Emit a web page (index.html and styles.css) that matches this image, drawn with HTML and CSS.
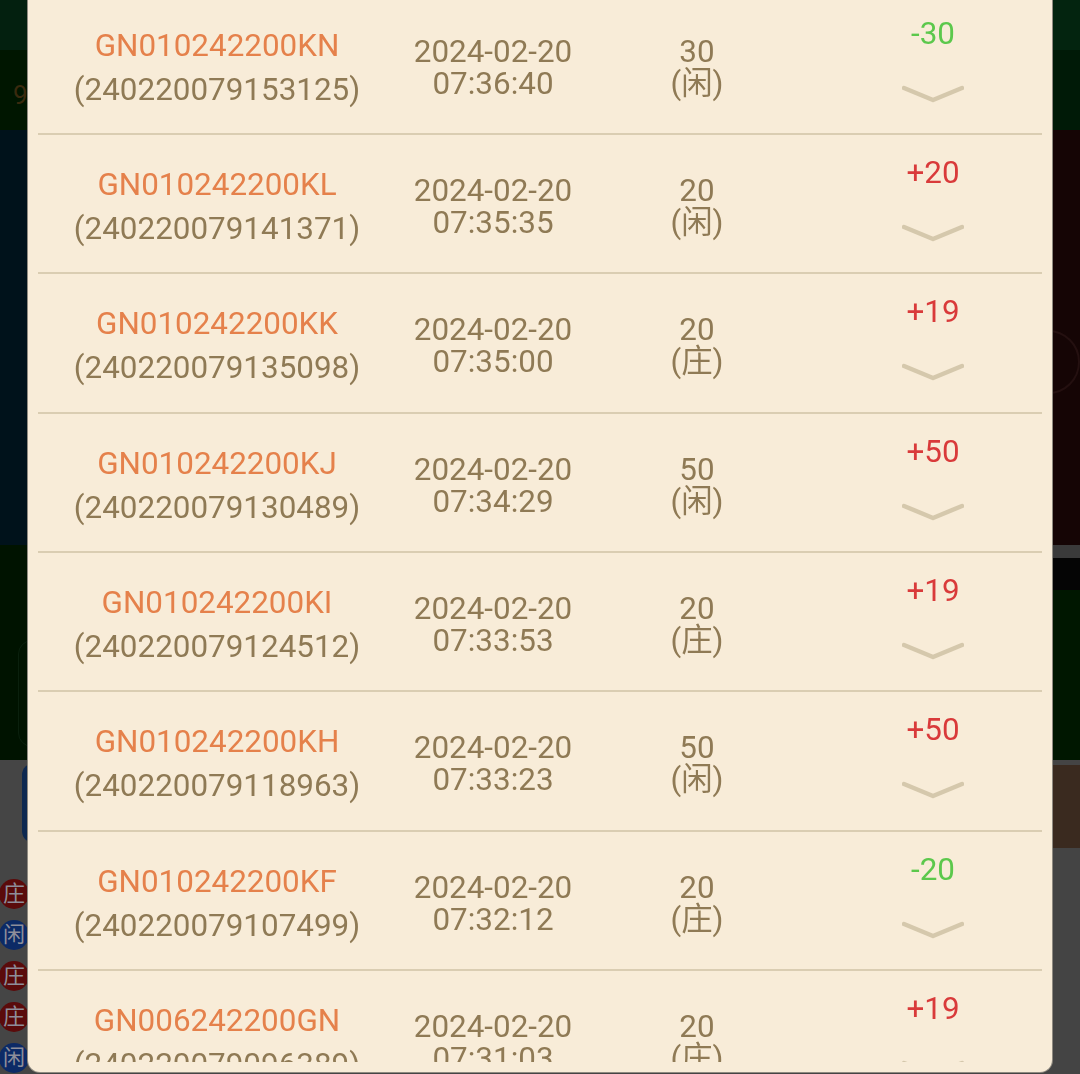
FILE: index.html
```html
<!DOCTYPE html>
<html lang="zh">
<head>
  <meta charset="UTF-8">
  <meta name="viewport" content="width=device-width, initial-scale=1.0">
  <title>投注记录</title>
  <link rel="stylesheet" href="styles.css">
</head>
<body>
  <!-- game table behind the dialog -->
  <div class="game">
    <div class="band b1"><div class="side l"></div><div class="side r"></div></div>
    <div class="band b2"><div class="side l"><span class="round-no">9</span></div><div class="side r"></div></div>
    <div class="band b3"><div class="side l"></div><div class="side r"><span class="ring"></span></div></div>
    <div class="band b4">
      <div class="side l"><span class="ghost-btn"></span></div>
      <div class="side r">
        <div class="r-gray"></div>
        <div class="r-dark"><span class="r-chip"></span></div>
      </div>
    </div>
    <div class="band b5">
      <div class="side l">
        <div class="blue-btn"></div>
        <div class="badges">
          <span class="badge red">庄</span>
          <span class="badge blue">闲</span>
          <span class="badge red">庄</span>
          <span class="badge red">庄</span>
          <span class="badge blue">闲</span>
        </div>
      </div>
      <div class="side r">
        <div class="brown-btn">台</div>
        <div class="r-lines"><span class="mark"></span></div>
      </div>
    </div>
  </div>

  <div class="dialog">
    <div class="list">
      <div class="row">
        <div class="id"><span class="code">GN010242200KN</span><br>(240220079153125)</div>
        <div class="when">2024-02-20<br>07:36:40</div>
        <div class="bet">30<br>(闲)</div>
        <div class="win"><span class="lose">-30</span><svg class="chev" viewBox="0 0 62 20"><polyline points="2,4 31,16 60,4"/></svg></div>
      </div>
      <div class="row">
        <div class="id"><span class="code">GN010242200KL</span><br>(240220079141371)</div>
        <div class="when">2024-02-20<br>07:35:35</div>
        <div class="bet">20<br>(闲)</div>
        <div class="win"><span class="gain">+20</span><svg class="chev" viewBox="0 0 62 20"><polyline points="2,4 31,16 60,4"/></svg></div>
      </div>
      <div class="row">
        <div class="id"><span class="code">GN010242200KK</span><br>(240220079135098)</div>
        <div class="when">2024-02-20<br>07:35:00</div>
        <div class="bet">20<br>(庄)</div>
        <div class="win"><span class="gain">+19</span><svg class="chev" viewBox="0 0 62 20"><polyline points="2,4 31,16 60,4"/></svg></div>
      </div>
      <div class="row">
        <div class="id"><span class="code">GN010242200KJ</span><br>(240220079130489)</div>
        <div class="when">2024-02-20<br>07:34:29</div>
        <div class="bet">50<br>(闲)</div>
        <div class="win"><span class="gain">+50</span><svg class="chev" viewBox="0 0 62 20"><polyline points="2,4 31,16 60,4"/></svg></div>
      </div>
      <div class="row">
        <div class="id"><span class="code">GN010242200KI</span><br>(240220079124512)</div>
        <div class="when">2024-02-20<br>07:33:53</div>
        <div class="bet">20<br>(庄)</div>
        <div class="win"><span class="gain">+19</span><svg class="chev" viewBox="0 0 62 20"><polyline points="2,4 31,16 60,4"/></svg></div>
      </div>
      <div class="row">
        <div class="id"><span class="code">GN010242200KH</span><br>(240220079118963)</div>
        <div class="when">2024-02-20<br>07:33:23</div>
        <div class="bet">50<br>(闲)</div>
        <div class="win"><span class="gain">+50</span><svg class="chev" viewBox="0 0 62 20"><polyline points="2,4 31,16 60,4"/></svg></div>
      </div>
      <div class="row">
        <div class="id"><span class="code">GN010242200KF</span><br>(240220079107499)</div>
        <div class="when">2024-02-20<br>07:32:12</div>
        <div class="bet">20<br>(庄)</div>
        <div class="win"><span class="lose">-20</span><svg class="chev" viewBox="0 0 62 20"><polyline points="2,4 31,16 60,4"/></svg></div>
      </div>
      <div class="row">
        <div class="id"><span class="code">GN006242200GN</span><br>(240220079096389)</div>
        <div class="when">2024-02-20<br>07:31:03</div>
        <div class="bet">20<br>(庄)</div>
        <div class="win"><span class="gain">+19</span><svg class="chev" viewBox="0 0 62 20"><polyline points="2,4 31,16 60,4"/></svg></div>
      </div>
    </div>
  </div>
</body>
</html>
```

FILE: styles.css
```css
body {
  margin: 0;
  height: 1074px;
  overflow: hidden;
  font-family: Roboto, "Noto Sans CJK SC", sans-serif;
  background: #1a1a1a;
}

/* ---- table behind ---- */
.game {
  display: flex;
  flex-direction: column;
  height: 1074px;
}
.band {
  display: flex;
}
.side {
  width: 50%;
}
.b1 { height: 50px; }
.b1 .l { background: #03200f; }
.b1 .r { background: #03240f; }

.b2 { height: 80px; }
.b2 .l { background: #001600; }
.b2 .r { background: #001a07; }
.round-no {
  display: block;
  padding: 30px 0 0 13px;
  font-size: 26px;
  line-height: 30px;
  color: #3a2a0e;
}

.b3 { height: 415px; }
.b3 .l { background: #00121b; }
.b3 .r { background: #150505; }
.ring {
  display: block;
  margin: 200px 0 0 auto;
  width: 60px;
  height: 60px;
  border: 2px solid #241010;
  border-radius: 50%;
}

.b4 { height: 215px; }
.b4 .l { background: #001300; }
.b4 .r { display: flex; flex-direction: column; background: #001700; }
.ghost-btn {
  display: block;
  margin: 95px 0 0 18px;
  height: 105px;
  border: 1px solid #0a200d;
  border-radius: 14px;
}
.r-gray { height: 13px; background: #3a3a3a; }
.r-dark { height: 32px; background: #050505; }
.r-chip {
  display: block;
  width: 14px;
  height: 30px;
  background: #2c1c08;
}

.b5 { flex: 1; }
.b5 .l { background: #454545; }
.b5 .r { background: #444; }
.blue-btn {
  margin: 3px 0 0 22px;
  height: 80px;
  background: #0d2850;
  border-radius: 12px 0 0 12px;
}
.badges {
  display: flex;
  flex-direction: column;
  gap: 11px;
  margin-top: 36px;
}
.badge {
  width: 30px;
  height: 30px;
  margin-left: -1px;
  border-radius: 50%;
  font-size: 22px;
  line-height: 30px;
  text-align: center;
  color: #8e8e9a;
}
.badge.red { background: #5a0b0b; }
.badge.blue { background: #0c2a66; }
.brown-btn {
  margin-top: 5px;
  height: 83px;
  padding-left: 9px;
  background: #3a2a1f;
  color: #6a5848;
  font-size: 30px;
  line-height: 83px;
}
.r-lines {
  padding-top: 110px;
}
.mark {
  display: block;
  margin-left: 8px;
  width: 10px;
  height: 24px;
  background: #222;
}

/* ---- record dialog ---- */
.dialog {
  position: fixed;
  top: 0;
  left: 28px;
  width: 1024px;
  height: 1072px;
  box-sizing: border-box;
  padding: 0 10px 10px;
  background: #f8ecd8;
  border-radius: 0 0 12px 12px;
  box-shadow: 0 0 0 1px #8f8a80;
}
.list {
  height: 100%;
  overflow: hidden;
}
.row {
  display: grid;
  grid-template-columns: 358px 194px 214px 1fr;
  height: 137.33px;
  border-bottom: 2px solid #dacdb2;
  color: #8f7a55;
  font-size: 31.4px;
  text-align: center;
}
.row:first-child {
  margin-top: -4.4px;
}
.id {
  padding-top: 28px;
  line-height: 44px;
}
.code {
  color: #e5814b;
}
.when,
.bet {
  padding-top: 40px;
  line-height: 32px;
}
.win {
  display: flex;
  flex-direction: column;
  align-items: center;
  padding: 18px 0 0 20px;
  line-height: 40px;
}
.gain { color: #d93a3a; }
.lose { color: #5cc84c; }
.chev {
  margin-top: 30px;
  width: 62px;
  height: 20px;
}
.chev polyline {
  fill: none;
  stroke: #d5c8ac;
  stroke-width: 4.5;
  stroke-linecap: round;
  stroke-linejoin: round;
}
```
